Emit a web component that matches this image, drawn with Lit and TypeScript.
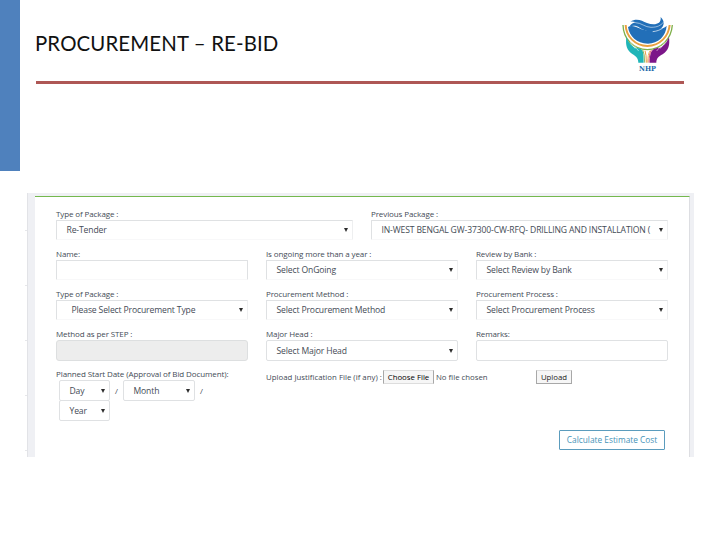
import { LitElement, html, css } from 'lit';
import { customElement, property } from 'lit/decorators.js';

@customElement('nhp-logo')
class NhpLogo extends LitElement {
  static styles = css`
    :host {
      display: block;
      width: 54px;
      height: 60px;
    }

    svg {
      display: block;
    }
  `;

  // drawn on a grid of thirds of a pixel
  render() {
    return html`
      <svg width="54" height="60" viewBox="60 30 162 180" fill="none">
        <path d="M69 60 C70 102 100 133 142 134 C184 133 214 102 217 60" stroke="#7fb04a" stroke-width="4" />
        <path d="M77 60 C78 94 105 122 142 123 C180 122 206 94 209 60" stroke="#e9a040" stroke-width="6" />
        <path d="M84 66 C94 60 106 64 118 70 C134 78 150 77 166 73 C180 69 192 72 200 62 C198 94 174 115 144 116 C110 115 88 94 84 66Z" fill="#226fb8" />
        <path d="M91 50 C109 38 125 46 141 54 C160 61 185 60 182 36 C198 51 192 70 171 77 C149 83 132 76 119 68 C109 62 100 61 88 65 C93 57 100 53 108 52 C101 49 96 49 91 50Z" fill="#226fb8" />
        <path d="M106 53 C124 53 135 67 153 67 C172 67 183 61 190 52" stroke="#fff" stroke-width="1.6" />
        <path d="M158 80 C184 77 194 66 196 56" stroke="#fff" stroke-width="2" />
        <path d="M79 97 C84 107 88 117 101 126 C109 130 119 128 126 135 C131 141 131 155 131 173 H115 C115 161 109 155 98 148 C80 137 76 120 79 97Z" fill="#20b5b8" />
        <path d="M207 97 C202 107 198 117 185 126 C177 130 165 128 158 135 C151 142 149 155 149 173 H169 C169 161 175 155 188 148 C206 137 210 120 207 97Z" fill="#7c1689" />
        <path d="M91 112 L106 131 M103 122 L116 138" stroke="#fff" stroke-width="1.6" />
        <path d="M195 112 L180 131 M183 122 L170 138" stroke="#fff" stroke-width="1.6" />
        <path d="M128 134 Q134 145 134 173" stroke="#8cbc65" stroke-width="3" />
        <path d="M135 137 Q139 148 139 173" stroke="#e99b43" stroke-width="3" />
        <path d="M150 137 Q143 148 143 173" stroke="#e9bd64" stroke-width="3" />
        <path d="M154 136 Q147 147 147 173" stroke="#d84c65" stroke-width="3" />
        <text x="117" y="197" textLength="51" lengthAdjust="spacingAndGlyphs" font-family="DejaVu Serif, serif" font-size="21" font-weight="700" fill="#2068a8">NHP</text>
      </svg>
    `;
  }
}

@customElement('form-field')
class FormField extends LitElement {
  @property() label = '';
  @property() value = '';
  @property() kind = 'select';

  static styles = css`
    :host {
      display: block;
      min-width: 0;
      color: #444b56;
      font-family: 'Open Sans', sans-serif;
    }

    .label {
      height: 12px;
      font-size: 8px;
      line-height: 12px;
      white-space: nowrap;
      letter-spacing: -0.11px;
    }

    .box {
      box-sizing: border-box;
      display: flex;
      align-items: center;
      height: 20px;
      padding: 0 4px 0 9.5px;
      border: 1px solid #dfe1e3;
      border-bottom-color: #f8f8f9;
      border-right-color: #eeeff0;
      border-radius: 1px;
      font-size: 8.6px;
      background: #fff;
    }

    .box.input {
      border-right-color: #dfe1e3;
    }

    .box.disabled {
      height: 21px;
      background: #ededed;
      border-color: #dddfe0;
      border-radius: 3px;
    }

    :host([closed]) .box {
      height: 21px;
      border-color: #dfe1e3;
      border-radius: 2px;
    }

    :host([indent]) .box {
      padding-left: 14.5px;
    }

    .value {
      flex: 1;
      min-width: 0;
      margin-right: 8px;
      white-space: nowrap;
      letter-spacing: -0.14px;
    }

    .arrow {
      border: 2px solid transparent;
      border-top: 4px solid #2d2d2d;
      border-bottom: 0;
    }
  `;

  render() {
    return html`
      ${this.label ? html`<div class="label">${this.label}</div>` : ''}
      <div class="box ${this.kind}">
        <span class="value">${this.value}</span>
        ${this.kind === 'select' ? html`<span class="arrow"></span>` : ''}
      </div>
    `;
  }
}

@customElement('app-root')
class AppRoot extends LitElement {
  static styles = css`
    :host {
      display: block;
      width: 720px;
      height: 540px;
      overflow: hidden;
      background: #fff;
      font-family: 'Open Sans', sans-serif;
      color: #444b56;
    }

    .top {
      display: flex;
      height: 193px;
    }

    .bar {
      width: 20px;
      height: 171px;
      background: #4f81bd;
    }

    .heading {
      width: 648px;
      margin-left: 16px;
    }

    .title-row {
      box-sizing: border-box;
      display: flex;
      justify-content: space-between;
      height: 84px;
      padding: 15px 10px 0 0;
      border-bottom: 3px solid #ae5755;
    }

    h1 {
      margin: 15px 0 0 -1px;
      color: #111;
      font-family: Lato, sans-serif;
      font-size: 20.4px;
      font-weight: 400;
      line-height: 26px;
      white-space: nowrap;
      letter-spacing: 0.13px;
    }

    .shot {
      box-sizing: border-box;
      display: flex;
      width: 669px;
      height: 264px;
      margin-left: 25px;
    }

    .ticks {
      box-sizing: border-box;
      display: flex;
      flex: none;
      flex-direction: column;
      gap: 54px;
      width: 3px;
      padding-top: 37px;
      border-right: 1px solid #e2e3e7;
    }

    .ticks i {
      height: 1px;
      background: #e6e7ea;
    }

    .frame {
      box-sizing: border-box;
      flex: 1;
      padding: 3px 4px 0 7px;
      background: #eff0f4;
    }

    .panel {
      box-sizing: border-box;
      height: 261px;
      padding: 11px 21px 0 21px;
      border-top: 1px solid #74b84e;
      border-right: 1px solid #dddee2;
      background: #fff;
    }

    .row {
      display: grid;
      grid-template-columns: repeat(3, 192px);
      gap: 18px;
      height: 40px;
    }

    .row.two {
      grid-template-columns: repeat(2, 297px);
    }

    .planned {
      font-size: 8px;
      line-height: 12px;
      white-space: nowrap;
      letter-spacing: -0.1px;
    }

    .dates {
      display: flex;
      flex-wrap: wrap;
      align-items: center;
      width: 160px;
      padding-left: 3px;
    }

    .dates .day {
      width: 51px;
    }

    .dates .month {
      width: 72px;
    }

    .dates .day,
    .dates .month {
      height: 20px;
    }

    .slash {
      width: 13px;
      font-size: 8px;
      text-align: center;
    }

    .upload {
      display: flex;
      align-items: center;
      grid-column: span 2;
      height: 14px;
      margin-top: 2px;
      font-size: 7.8px;
      white-space: nowrap;
    }

    .upload .caption {
      width: 117px;
      letter-spacing: 0.02px;
    }

    .upload button {
      box-sizing: border-box;
      height: 14px;
      padding: 0;
      border: 1px solid #a8a8a8;
      border-top-color: #ddd;
      border-radius: 0;
      background: #f6f6f6;
      font: 7.8px/12px 'Open Sans', sans-serif;
      color: #222;
    }

    .upload .choose {
      width: 51px;
      border-bottom-color: #ddd;
      color: #000;
    }

    .upload .none {
      box-sizing: border-box;
      width: 102px;
      padding-left: 2px;
    }

    .upload .send {
      width: 36px;
    }

    .actions {
      display: flex;
      justify-content: flex-end;
      padding: 22px 3px 0 0;
    }

    .calculate {
      box-sizing: border-box;
      width: 106px;
      height: 20px;
      padding: 0;
      border: 1px solid #5b9cbd;
      border-radius: 1px;
      background: #fff;
      color: #4593b8;
      font: 8.3px/18px 'Open Sans', sans-serif;
      white-space: nowrap;
    }
  `;

  render() {
    return html`
      <div class="top">
        <div class="bar"></div>
        <div class="heading">
          <div class="title-row">
            <h1>PROCUREMENT – RE-BID</h1>
            <nhp-logo></nhp-logo>
          </div>
        </div>
      </div>
      <div class="shot">
        <div class="ticks"><i></i><i></i><i></i><i></i><i></i></div>
        <div class="frame">
          <div class="panel">
            <div class="row two">
              <form-field label="Type of Package :" value="Re-Tender"></form-field>
              <form-field label="Previous Package :" value="IN-WEST BENGAL GW-37300-CW-RFQ- DRILLING AND INSTALLATION ("></form-field>
            </div>
            <div class="row">
              <form-field label="Name:" kind="input"></form-field>
              <form-field label="Is ongoing more than a year :" value="Select OnGoing"></form-field>
              <form-field label="Review by Bank :" value="Select Review by Bank"></form-field>
            </div>
            <div class="row">
              <form-field indent label="Type of Package :" value="Please Select Procurement Type"></form-field>
              <form-field label="Procurement Method :" value="Select Procurement Method"></form-field>
              <form-field label="Procurement Process :" value="Select Procurement Process"></form-field>
            </div>
            <div class="row">
              <form-field label="Method as per STEP :" kind="disabled"></form-field>
              <form-field closed label="Major Head :" value="Select Major Head"></form-field>
              <form-field closed label="Remarks:" kind="input"></form-field>
            </div>
            <div class="row">
              <div>
                <div class="planned">Planned Start Date (Approval of Bid Document):</div>
                <div class="dates">
                  <form-field closed class="day" value="Day"></form-field>
                  <span class="slash">/</span>
                  <form-field closed class="month" value="Month"></form-field>
                  <span class="slash">/</span>
                  <form-field closed class="day" value="Year"></form-field>
                </div>
              </div>
              <div class="upload">
                <span class="caption">Upload Justification File (if any) :</span>
                <button class="choose">Choose File</button>
                <span class="none">No file chosen</span>
                <button class="send">Upload</button>
              </div>
            </div>
            <div class="actions">
              <button class="calculate">Calculate Estimate Cost</button>
            </div>
          </div>
        </div>
      </div>
    `;
  }
}
